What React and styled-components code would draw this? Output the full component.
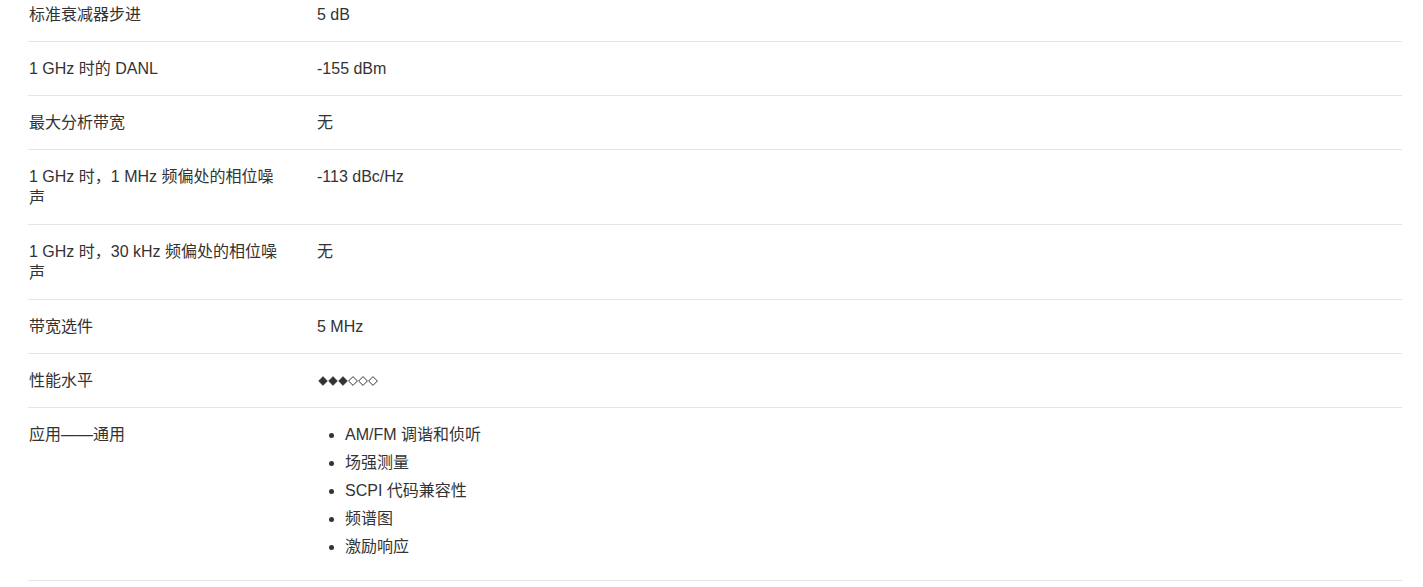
import styled, { createGlobalStyle } from "styled-components";

const GlobalStyle = createGlobalStyle`
    html, body {
        margin: 0;
        padding: 0;
        background: #FFFFFF;
        overflow: hidden;
    }
    body {
        font-family: "Liberation Sans", Arial, "Noto Sans CJK SC", sans-serif;
        color: #333333;
    }
`;

const specs = [
    { label: "标准衰减器步进", value: "5 dB" },
    { label: "1 GHz 时的 DANL", value: "-155 dBm" },
    { label: "最大分析带宽", value: "无" },
    { label: "1 GHz 时，1 MHz 频偏处的相位噪声", value: "-113 dBc/Hz" },
    { label: "1 GHz 时，30 kHz 频偏处的相位噪声", value: "无" },
    { label: "带宽选件", value: "5 MHz" },
    { label: "性能水平", rating: 3 },
    {
        label: "应用——通用",
        list: ["AM/FM 调谐和侦听", "场强测量", "SCPI 代码兼容性", "频谱图", "激励响应"],
    },
];

function Diamond({ filled }) {
    return (
        <svg width="10" height="10" viewBox="0 0 10 10">
            <path
                d="M5 0.6 L9.4 5 L5 9.4 L0.6 5 Z"
                fill={filled ? "#333333" : "#FFFFFF"}
                stroke="#333333"
                strokeWidth={filled ? 0.6 : 1}
            />
        </svg>
    );
}

export default function App() {
    return (
        <>
            <GlobalStyle />
            <SpecTable>
                {specs.map((s) => (
                    <SpecRow key={s.label}>
                        <Label>{s.label}</Label>
                        <Value>
                            {s.value}
                            {s.rating !== undefined && (
                                <Rating>
                                    {[0, 1, 2, 3, 4, 5].map((i) => (
                                        <Diamond key={i} filled={i < s.rating} />
                                    ))}
                                </Rating>
                            )}
                            {s.list && (
                                <BulletList>
                                    {s.list.map((item) => (
                                        <li key={item}>{item}</li>
                                    ))}
                                </BulletList>
                            )}
                        </Value>
                    </SpecRow>
                ))}
            </SpecTable>
        </>
    );
}

const SpecTable = styled.div`
    margin: -12px 21px 0 28px;
    display: flex;
    flex-direction: column;
`;

const SpecRow = styled.div`
    display: grid;
    grid-template-columns: 289px 1fr;
    border-bottom: 1px solid #E5E5E5;
    padding: 16px 0;
    font-size: 16px;
    line-height: 21px;
`;

const Label = styled.div`
    padding: 0 36px 0 1px;
`;

const Value = styled.div`
    min-width: 0;
`;

const Rating = styled.div`
    display: flex;
    align-items: center;
    height: 21px;
    margin-left: 1px;
`;

const BulletList = styled.ul`
    margin: 0;
    padding-left: 28px;
    & > li {
        margin-bottom: 7px;
    }
`;
